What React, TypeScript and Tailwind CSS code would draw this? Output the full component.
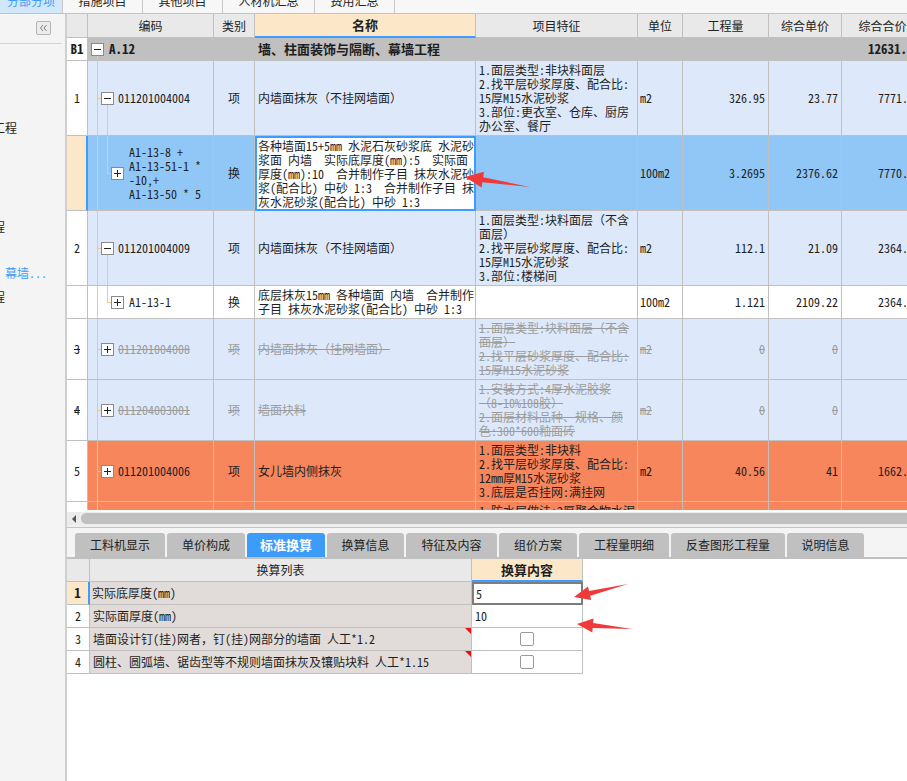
import React from "react";

const FONT = "font-['Noto_Sans_Mono_CJK_SC','Noto_Sans_CJK_SC',sans-serif]";
const CELL = "border-r border-b border-[#c0c0c0]";
const LINEC = "bg-[#f6c48c]";
const COLS = "grid grid-cols-[21px_126px_41px_221px_162px_45px_86px_73px_82px]";
const STRIKE = "text-[#9c9c9c] line-through";

const SEG: Record<string, string> = {
  v9: "absolute left-[9px] top-0 bottom-0 w-px",
  v9b: "absolute left-[9px] top-1/2 bottom-0 w-px",
  v19t: "absolute left-[19px] top-0 h-1/2 w-px",
  v19b: "absolute left-[19px] top-1/2 bottom-0 w-px",
  h9: "absolute left-[9px] top-1/2 w-[4px] h-px",
  h19: "absolute left-[19px] top-1/2 w-[4px] h-px",
};

function Box({ plus }: { plus?: boolean }) {
  return (
    <span className="relative block w-[13px] h-[13px] shrink-0 border border-[#8a8a8a] bg-white">
      <span className="absolute left-[2px] top-[5px] w-[7px] h-px bg-[#222]" />
      {plus && <span className="absolute left-[5px] top-[2px] w-px h-[7px] bg-[#222]" />}
    </span>
  );
}

function Lines({ l }: { l: string[] }) {
  return (
    <>
      {l.map((s, i) => (
        <div key={i} className="whitespace-pre">
          {s}
        </div>
      ))}
    </>
  );
}

type RowProps = {
  h: string;
  bg: string;
  num?: React.ReactNode;
  numCls?: string;
  level: 1 | 2 | 3;
  plus?: boolean;
  segs: string[];
  code: React.ReactNode;
  codeCls?: string;
  cat?: string;
  name?: React.ReactNode;
  nameCls?: string;
  feat?: string[];
  unit?: string;
  qty?: string;
  price?: string;
  total?: string;
  totalCls?: string;
  txt?: string;
};

function Row(p: RowProps) {
  const t = p.txt ?? "";
  const pl = p.level === 1 ? "pl-[3px]" : p.level === 2 ? "pl-[13px]" : "pl-[23px]";
  return (
    <div className={`${COLS} ${p.h} ${p.bg} text-[12px] leading-[14px] text-[#1e1e1e] shrink-0`}>
      <div className={`${p.numCls ?? `${CELL} bg-white`} flex items-center justify-center`}>{p.num}</div>
      <div className={`${CELL} relative flex items-center ${pl}`}>
        {p.segs.map((s) => (
          <span key={s} className={`${SEG[s]} ${LINEC}`} />
        ))}
        <Box plus={p.plus} />
        <div className={`${p.level === 2 ? "ml-[4px]" : "ml-[5px]"} whitespace-pre ${p.codeCls ?? ""} ${t}`}>{p.code}</div>
      </div>
      <div className={`${CELL} flex items-center justify-center ${t}`}>{p.cat}</div>
      <div className={`${p.nameCls ?? `${CELL} px-[3px]`} flex items-center overflow-hidden`}>
        <div className={t}>{p.name}</div>
      </div>
      <div className={`${CELL} flex items-center pl-[3px] overflow-hidden`}>
        <div className={t}>{p.feat && <Lines l={p.feat} />}</div>
      </div>
      <div className={`${CELL} flex items-center pl-[2px] ${t}`}>{p.unit}</div>
      <div className={`${CELL} flex items-center justify-end pr-[3px] ${t}`}>{p.qty}</div>
      <div className={`${CELL} flex items-center justify-end pr-[3px] ${t}`}>{p.price}</div>
      <div className={`${CELL} flex items-center justify-end pr-[3px] ${p.totalCls ?? ""} ${t}`}>{p.total}</div>
    </div>
  );
}

function TopBar() {
  const tabs = [
    { t: "措施项目", w: "w-[80px]" },
    { t: "其他项目", w: "w-[80px]" },
    { t: "人材机汇总", w: "w-[92px]" },
    { t: "费用汇总", w: "w-[80px]" },
  ];
  return (
    <div className="h-[14px] border-b border-[#c4c4c4] bg-[#f7f7f7] flex overflow-hidden text-[12px] leading-[12px] shrink-0">
      <div className="w-[62px] bg-[#d3e7fa] text-[#3d9cff] flex justify-center">
        <span className="-mt-[5px] whitespace-nowrap">分部分项</span>
      </div>
      {tabs.map((x) => (
        <div key={x.t} className={`${x.w} border-l border-[#c8c8c8] text-[#222] flex justify-center`}>
          <span className="-mt-[5px] whitespace-nowrap">{x.t}</span>
        </div>
      ))}
      <div className="border-l border-[#c8c8c8]" />
    </div>
  );
}

function Sidebar() {
  return (
    <div className="w-[67px] shrink-0 bg-[#f4f4f4] border-r-2 border-[#cfcfcf] flex flex-col text-[12px] leading-[24px] overflow-hidden">
      <div className="h-[30px] border-b border-[#d6d6d6] mr-[3px] flex justify-end pr-[11px] pt-[7px]">
        <div className="w-[15px] h-[14px] border border-[#b5b5b5] rounded-[2px] bg-[#ececec] flex items-center justify-center">
          <svg width="9" height="8" viewBox="0 0 9 8">
            <path d="M4 1 L1.5 4 L4 7 M7.5 1 L5 4 L7.5 7" fill="none" stroke="#7a7a7a" strokeWidth="1" />
          </svg>
        </div>
      </div>
      <div className="mt-[72px] -ml-[7px] whitespace-nowrap text-[#1e1e1e]">工程</div>
      <div className="mt-[75px] -ml-[7px] whitespace-nowrap text-[#1e1e1e]">程</div>
      <div className="mt-[22px] ml-[5px] whitespace-nowrap text-[#3d9cff]">幕墙...</div>
      <div className="-ml-[7px] whitespace-nowrap text-[#1e1e1e]">程</div>
    </div>
  );
}

function Header() {
  const H = `${CELL} bg-[#e9e9e9] flex items-center justify-center`;
  return (
    <div className={`${COLS} h-[24px] text-[12px] text-[#222] shrink-0`}>
      <div className={H} />
      <div className={H}>编码</div>
      <div className={H}>类别</div>
      <div className="border-r border-r-[#c0c0c0] border-b-2 border-b-[#3d9cff] bg-[#fde7c9] flex items-center justify-center font-bold text-[13px]">
        名称
      </div>
      <div className={H}>项目特征</div>
      <div className={H}>单位</div>
      <div className={H}>工程量</div>
      <div className={H}>综合单价</div>
      <div className={H}>综合合价</div>
    </div>
  );
}

function PartialRow() {
  return (
    <div className={`${COLS} h-[61px] bg-[#f7865d] text-[12px] leading-[14px] text-[#1e1e1e] shrink-0`}>
      <div className={`${CELL} bg-white`} />
      <div className={`${CELL} relative`}>
        <span className={`${SEG.v9} ${LINEC}`} />
      </div>
      <div className={CELL} />
      <div className={CELL} />
      <div className={`${CELL} pl-[3px] pt-[2px] overflow-hidden whitespace-pre`}>1.防水层做法:2厚聚合物水泥</div>
      <div className={CELL} />
      <div className={CELL} />
      <div className={CELL} />
      <div className={CELL} />
    </div>
  );
}

function MainGrid() {
  const LB = "bg-[#dde9fb]";
  const OR = "bg-[#f7865d]";
  return (
    <div className="h-[496px] overflow-hidden flex flex-col shrink-0">
      <div className="w-[857px] flex flex-col">
        <Header />
        <Row
          h="h-[23px]"
          bg="bg-[#c0c0c0]"
          num={<span className="font-bold text-[13px]">B1</span>}
          level={1}
          segs={["v9b"]}
          code={<span className="font-bold text-[13px]">A.12</span>}
          name={<span className="font-bold text-[13px] whitespace-nowrap">墙、柱面装饰与隔断、幕墙工程</span>}
          total="12631.85"
          totalCls="font-bold text-[13px]"
        />
        <Row
          h="h-[75px]"
          bg={LB}
          num="1"
          level={2}
          segs={["v9", "h9", "v19b"]}
          code="011201004004"
          cat="项"
          name={<span className="whitespace-nowrap">内墙面抹灰（不挂网墙面）</span>}
          feat={["1.面层类型:非块料面层", "2.找平层砂浆厚度、配合比:", "15厚M15水泥砂浆", "3.部位:更衣室、仓库、厨房", "办公室、餐厅"]}
          unit="m2"
          qty="326.95"
          price="23.77"
          total="7771.24"
        />
        <Row
          h="h-[75px]"
          bg="bg-[#91c7f6]"
          num=""
          numCls="border-b border-[#c0c0c0] border-r-2 border-r-[#3d9cff] bg-[#fde7c9]"
          level={3}
          plus
          segs={["v9", "v19t", "h19"]}
          code={<Lines l={["A1-13-8 +", "A1-13-51-1 *", "-10,+", "A1-13-50 * 5"]} />}
          cat="换"
          nameCls="border-2 border-[#3d9cff] bg-white pl-[1px]"
          name={
            <Lines
              l={[
                "各种墙面15+5mm 水泥石灰砂浆底 水泥砂",
                "浆面 内墙  实际底厚度(mm):5  实际面",
                "厚度(mm):10  合并制作子目 抹灰水泥砂",
                "浆(配合比) 中砂 1:3  合并制作子目 抹",
                "灰水泥砂浆(配合比) 中砂 1:3",
              ]}
            />
          }
          unit="100m2"
          qty="3.2695"
          price="2376.62"
          total="7770.33"
        />
        <Row
          h="h-[75px]"
          bg={LB}
          num="2"
          level={2}
          segs={["v9", "h9", "v19b"]}
          code="011201004009"
          cat="项"
          name={<span className="whitespace-nowrap">内墙面抹灰（不挂网墙面）</span>}
          feat={["1.面层类型:块料面层（不含", "面层）", "2.找平层砂浆厚度、配合比:", "15厚M15水泥砂浆", "3.部位:楼梯间"]}
          unit="m2"
          qty="112.1"
          price="21.09"
          total="2364.19"
        />
        <Row
          h="h-[33px]"
          bg="bg-white"
          num=""
          level={3}
          plus
          segs={["v9", "v19t", "h19"]}
          code="A1-13-1"
          cat="换"
          name={<Lines l={["底层抹灰15mm 各种墙面 内墙  合并制作", "子目 抹灰水泥砂浆(配合比) 中砂 1:3"]} />}
          unit="100m2"
          qty="1.121"
          price="2109.22"
          total="2364.49"
        />
        <Row
          h="h-[61px]"
          bg={LB}
          num={<span className="line-through">3</span>}
          level={2}
          plus
          segs={["v9", "h9"]}
          code="011201004008"
          cat="项"
          name={<span className="whitespace-nowrap">内墙面抹灰（挂网墙面）</span>}
          feat={["1.面层类型:块料面层（不含", "面层）", "2.找平层砂浆厚度、配合比:", "15厚M15水泥砂浆"]}
          unit="m2"
          qty="0"
          price="0"
          txt={STRIKE}
        />
        <Row
          h="h-[61px]"
          bg={LB}
          num={<span className="line-through">4</span>}
          level={2}
          plus
          segs={["v9", "h9"]}
          code="011204003001"
          cat="项"
          name={<span className="whitespace-nowrap">墙面块料</span>}
          feat={["1.安装方式:4厚水泥胶浆", "（8-10%108胶）", "2.面层材料品种、规格、颜", "色:300*600釉面砖"]}
          unit="m2"
          qty="0"
          price="0"
          txt={STRIKE}
        />
        <Row
          h="h-[61px]"
          bg={OR}
          num="5"
          level={2}
          plus
          segs={["v9", "h9"]}
          code="011201004006"
          cat="项"
          name={<span className="whitespace-nowrap">女儿墙内侧抹灰</span>}
          feat={["1.面层类型:非块料", "2.找平层砂浆厚度、配合比:", "12mm厚M15水泥砂浆", "3.底层是否挂网:满挂网"]}
          unit="m2"
          qty="40.56"
          price="41"
          total="1662.96"
        />
        <PartialRow />
      </div>
    </div>
  );
}

function Scrollbar() {
  return (
    <>
      <div className="h-[2px] bg-white shrink-0" />
      <div className="h-[13px] bg-[#ececec] flex items-center shrink-0">
        <span className="ml-[5px] w-0 h-0 border-t-[4px] border-b-[4px] border-r-[4px] border-t-transparent border-b-transparent border-r-[#555]" />
        <div className="ml-[5px] flex-1 h-[11px] rounded-l-full bg-[#c0c0c0]" />
      </div>
      <div className="h-[2px] bg-[#f0f0f0] shrink-0" />
      <div className="h-px bg-[#c4c4c4] shrink-0" />
    </>
  );
}

function BottomTabs() {
  const tabs = [
    { t: "工料机显示", w: "w-[90px]" },
    { t: "单价构成", w: "w-[78px]" },
    { t: "标准换算", w: "w-[78px]", a: true },
    { t: "换算信息", w: "w-[77px]" },
    { t: "特征及内容", w: "w-[91px]" },
    { t: "组价方案", w: "w-[78px]" },
    { t: "工程量明细", w: "w-[90px]" },
    { t: "反查图形工程量", w: "w-[114px]" },
    { t: "说明信息", w: "w-[77px]" },
  ];
  return (
    <>
      <div className="h-[29px] bg-[#f4f4f4] flex items-end gap-[2px] pl-[8px] shrink-0">
        {tabs.map((x) => (
          <div
            key={x.t}
            className={`${x.w} h-[24px] rounded-t-[3px] flex items-center justify-center whitespace-nowrap leading-[16px] ${
              x.a ? "bg-[#3d9bfc] text-white font-bold text-[13px]" : "bg-[#c0c0c0] text-[#222] text-[12px]"
            }`}
          >
            {x.t}
          </div>
        ))}
      </div>
      <div className="h-[2px] bg-[#c0c0c0] shrink-0" />
    </>
  );
}

function BottomTable() {
  const G = "grid grid-cols-[23px_382px_111px] h-[23px]";
  const rows = [
    { n: "2", l: "实际面厚度(mm)", v: "10" },
    { n: "3", l: "墙面设计钉(挂)网者，钉(挂)网部分的墙面 人工*1.2", c: true },
    { n: "4", l: "圆柱、圆弧墙、锯齿型等不规则墙面抹灰及镶贴块料 人工*1.15", c: true },
  ];
  return (
    <div className="flex flex-col text-[12px] leading-[16px] text-[#1e1e1e] w-[516px]">
      <div className={G}>
        <div className={`${CELL} bg-[#e9e9e9]`} />
        <div className={`${CELL} bg-[#e9e9e9] flex items-center justify-center`}>换算列表</div>
        <div className="border-r border-r-[#c0c0c0] border-b-2 border-b-[#3d9cff] bg-[#fde7c9] flex items-center justify-center font-bold text-[13px]">
          换算内容
        </div>
      </div>
      <div className={G}>
        <div className="border-b border-[#c0c0c0] border-r-2 border-r-[#3d9cff] bg-[#fde7c9] flex items-center justify-center font-bold text-[13px]">
          1
        </div>
        <div className={`${CELL} bg-[#e1dcd9] flex items-center pl-[2px]`}>实际底厚度(mm)</div>
        <div className="border-2 border-[#7d7d7d] bg-white flex items-center pl-[2px]">5</div>
      </div>
      {rows.map((r) => (
        <div key={r.n} className={G}>
          <div className={`${CELL} bg-white flex items-center justify-center`}>{r.n}</div>
          <div className={`${CELL} bg-[#e1dcd9] flex items-center pl-[3px] relative whitespace-nowrap`}>
            {r.l}
            {r.c && (
              <span className="absolute right-0 top-0 w-0 h-0 border-l-[6px] border-l-transparent border-t-[6px] border-t-[#ee1111]" />
            )}
          </div>
          <div className={`${CELL} bg-white flex items-center ${r.c ? "justify-center" : "pl-[3px]"}`}>
            {r.c ? <span className="block w-[14px] h-[14px] border border-[#9a9a9a] rounded-[2px] bg-white" /> : r.v}
          </div>
        </div>
      ))}
    </div>
  );
}

function Arrows() {
  return (
    <svg className="absolute left-0 top-0 pointer-events-none" width="907" height="781" viewBox="0 0 907 781">
      <polygon points="465,177 484,171.8 483.2,177.2 530,187 482.4,182.2 481.6,187.6" fill="#f03a3a" />
      <polygon points="574,597 588,586.5 589,590.9 628,584 590.2,595.7 591.2,600.1" fill="#f03a3a" />
      <polygon points="577,624 593.5,618.4 593.1,622.9 632,629 592.7,627.9 592.3,632.4" fill="#f03a3a" />
    </svg>
  );
}

export default function App() {
  return (
    <div className={`relative w-[907px] h-[781px] overflow-hidden bg-white flex flex-col ${FONT}`}>
      <TopBar />
      <div className="flex flex-1 min-h-0">
        <Sidebar />
        <div className="flex-1 min-w-0 flex flex-col overflow-hidden bg-white">
          <MainGrid />
          <Scrollbar />
          <BottomTabs />
          <BottomTable />
        </div>
      </div>
      <Arrows />
    </div>
  );
}
